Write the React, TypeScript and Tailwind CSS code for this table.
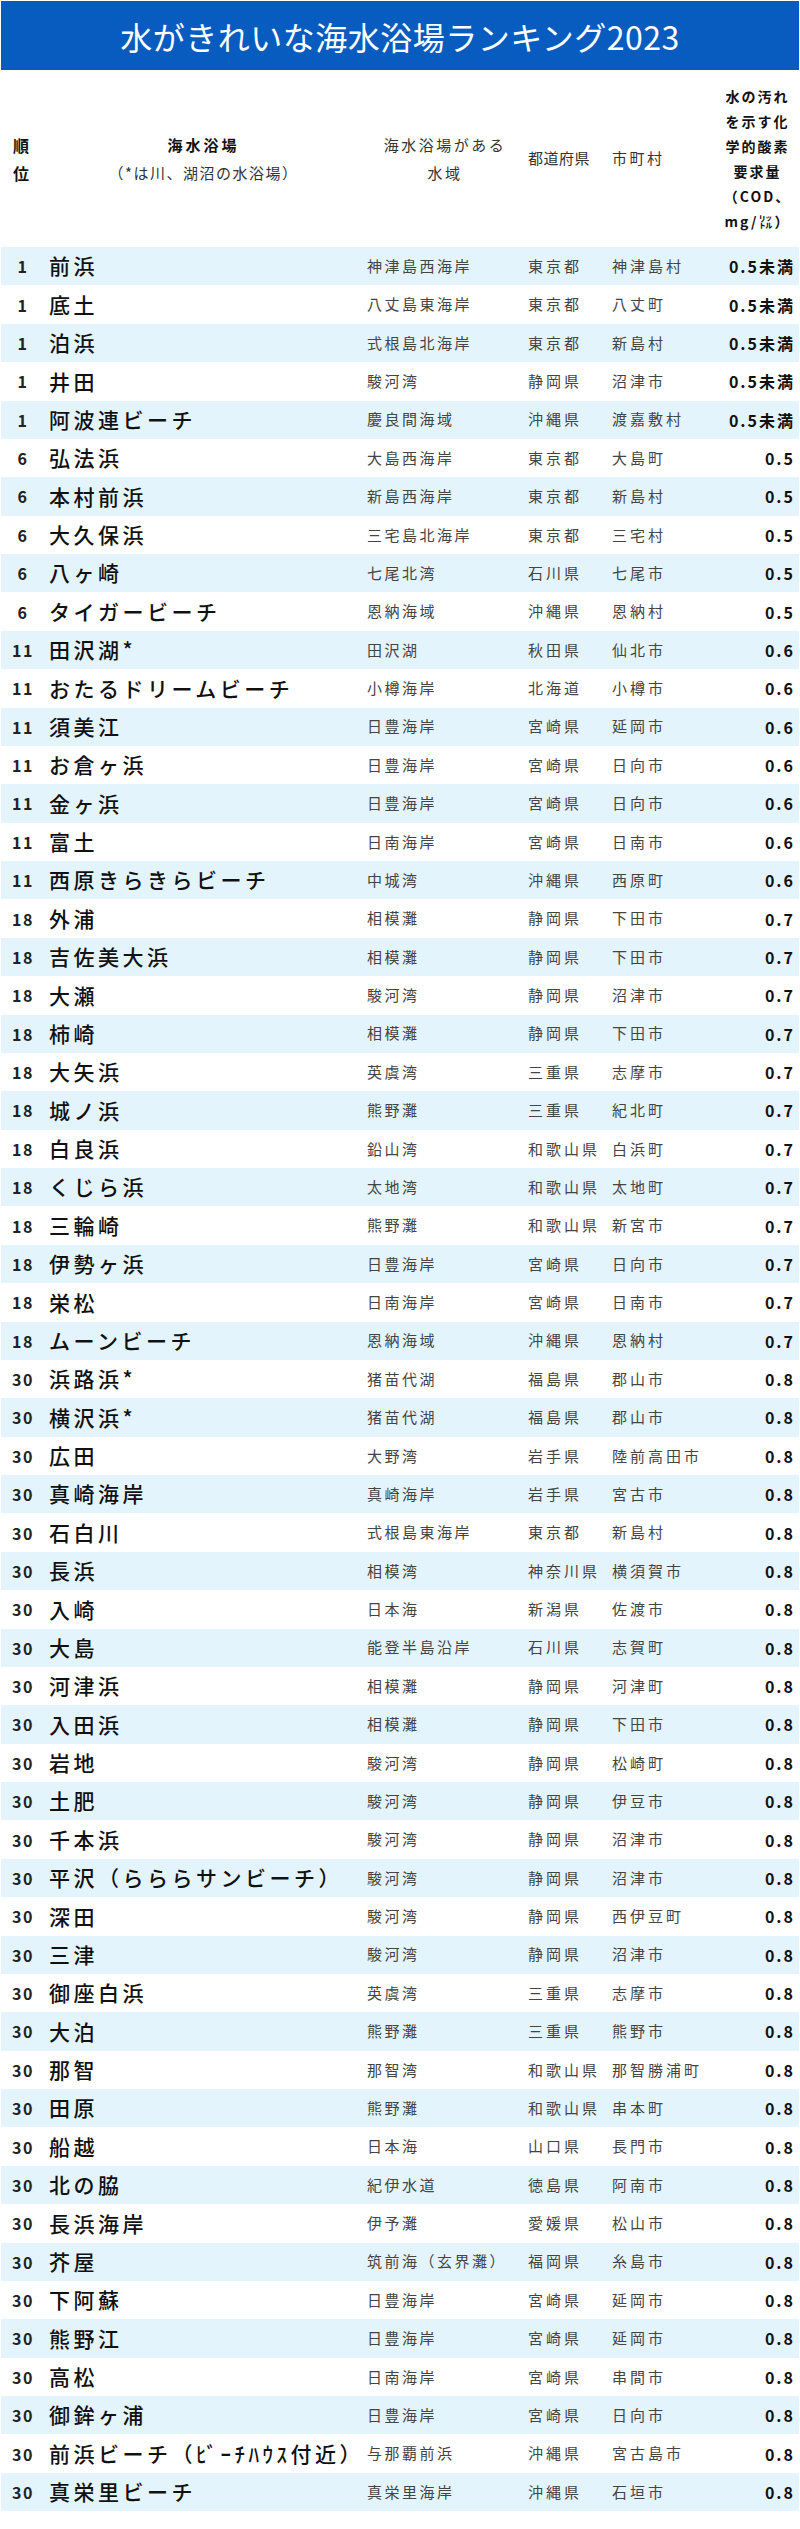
import React from "react";

type Row = [string, string, string, string, string, string];

const rows: Row[] = [
  ["1", "前浜", "神津島西海岸", "東京都", "神津島村", "0.5未満"],
  ["1", "底土", "八丈島東海岸", "東京都", "八丈町", "0.5未満"],
  ["1", "泊浜", "式根島北海岸", "東京都", "新島村", "0.5未満"],
  ["1", "井田", "駿河湾", "静岡県", "沼津市", "0.5未満"],
  ["1", "阿波連ビーチ", "慶良間海域", "沖縄県", "渡嘉敷村", "0.5未満"],
  ["6", "弘法浜", "大島西海岸", "東京都", "大島町", "0.5"],
  ["6", "本村前浜", "新島西海岸", "東京都", "新島村", "0.5"],
  ["6", "大久保浜", "三宅島北海岸", "東京都", "三宅村", "0.5"],
  ["6", "八ヶ崎", "七尾北湾", "石川県", "七尾市", "0.5"],
  ["6", "タイガービーチ", "恩納海域", "沖縄県", "恩納村", "0.5"],
  ["11", "田沢湖*", "田沢湖", "秋田県", "仙北市", "0.6"],
  ["11", "おたるドリームビーチ", "小樽海岸", "北海道", "小樽市", "0.6"],
  ["11", "須美江", "日豊海岸", "宮崎県", "延岡市", "0.6"],
  ["11", "お倉ヶ浜", "日豊海岸", "宮崎県", "日向市", "0.6"],
  ["11", "金ヶ浜", "日豊海岸", "宮崎県", "日向市", "0.6"],
  ["11", "富土", "日南海岸", "宮崎県", "日南市", "0.6"],
  ["11", "西原きらきらビーチ", "中城湾", "沖縄県", "西原町", "0.6"],
  ["18", "外浦", "相模灘", "静岡県", "下田市", "0.7"],
  ["18", "吉佐美大浜", "相模灘", "静岡県", "下田市", "0.7"],
  ["18", "大瀬", "駿河湾", "静岡県", "沼津市", "0.7"],
  ["18", "柿崎", "相模灘", "静岡県", "下田市", "0.7"],
  ["18", "大矢浜", "英虞湾", "三重県", "志摩市", "0.7"],
  ["18", "城ノ浜", "熊野灘", "三重県", "紀北町", "0.7"],
  ["18", "白良浜", "鉛山湾", "和歌山県", "白浜町", "0.7"],
  ["18", "くじら浜", "太地湾", "和歌山県", "太地町", "0.7"],
  ["18", "三輪崎", "熊野灘", "和歌山県", "新宮市", "0.7"],
  ["18", "伊勢ヶ浜", "日豊海岸", "宮崎県", "日向市", "0.7"],
  ["18", "栄松", "日南海岸", "宮崎県", "日南市", "0.7"],
  ["18", "ムーンビーチ", "恩納海域", "沖縄県", "恩納村", "0.7"],
  ["30", "浜路浜*", "猪苗代湖", "福島県", "郡山市", "0.8"],
  ["30", "横沢浜*", "猪苗代湖", "福島県", "郡山市", "0.8"],
  ["30", "広田", "大野湾", "岩手県", "陸前高田市", "0.8"],
  ["30", "真崎海岸", "真崎海岸", "岩手県", "宮古市", "0.8"],
  ["30", "石白川", "式根島東海岸", "東京都", "新島村", "0.8"],
  ["30", "長浜", "相模湾", "神奈川県", "横須賀市", "0.8"],
  ["30", "入崎", "日本海", "新潟県", "佐渡市", "0.8"],
  ["30", "大島", "能登半島沿岸", "石川県", "志賀町", "0.8"],
  ["30", "河津浜", "相模灘", "静岡県", "河津町", "0.8"],
  ["30", "入田浜", "相模灘", "静岡県", "下田市", "0.8"],
  ["30", "岩地", "駿河湾", "静岡県", "松崎町", "0.8"],
  ["30", "土肥", "駿河湾", "静岡県", "伊豆市", "0.8"],
  ["30", "千本浜", "駿河湾", "静岡県", "沼津市", "0.8"],
  ["30", "平沢（らららサンビーチ）", "駿河湾", "静岡県", "沼津市", "0.8"],
  ["30", "深田", "駿河湾", "静岡県", "西伊豆町", "0.8"],
  ["30", "三津", "駿河湾", "静岡県", "沼津市", "0.8"],
  ["30", "御座白浜", "英虞湾", "三重県", "志摩市", "0.8"],
  ["30", "大泊", "熊野灘", "三重県", "熊野市", "0.8"],
  ["30", "那智", "那智湾", "和歌山県", "那智勝浦町", "0.8"],
  ["30", "田原", "熊野灘", "和歌山県", "串本町", "0.8"],
  ["30", "船越", "日本海", "山口県", "長門市", "0.8"],
  ["30", "北の脇", "紀伊水道", "徳島県", "阿南市", "0.8"],
  ["30", "長浜海岸", "伊予灘", "愛媛県", "松山市", "0.8"],
  ["30", "芥屋", "筑前海（玄界灘）", "福岡県", "糸島市", "0.8"],
  ["30", "下阿蘇", "日豊海岸", "宮崎県", "延岡市", "0.8"],
  ["30", "熊野江", "日豊海岸", "宮崎県", "延岡市", "0.8"],
  ["30", "高松", "日南海岸", "宮崎県", "串間市", "0.8"],
  ["30", "御鉾ヶ浦", "日豊海岸", "宮崎県", "日向市", "0.8"],
  ["30", "前浜ビーチ（ﾋﾞｰﾁﾊｳｽ付近）", "与那覇前浜", "沖縄県", "宮古島市", "0.8"],
  ["30", "真栄里ビーチ", "真栄里海岸", "沖縄県", "石垣市", "0.8"],
];

const grid = "grid grid-cols-[43px_323px_161px_84px_108px_1fr]";

export default function App() {
  return (
    <div className="w-[800px] bg-white px-[1px] pt-[1px] font-['Noto_Sans_CJK_JP','Noto_Sans',sans-serif]">
      <div className="flex h-[69px] items-center justify-center bg-[#095cbf] text-[32px] tracking-[0.5px] text-white">
        水がきれいな海水浴場ランキング2023
      </div>

      <div className={`${grid} h-[177px] items-center`}>
        <div className="pl-[12px] text-[16px] font-bold leading-[28px] text-[#111]">
          <div>順</div>
          <div>位</div>
        </div>
        <div className="pr-[4px] text-center leading-[28px]">
          <div className="text-[15px] font-bold tracking-[3px] text-[#111]">海水浴場</div>
          <div className="text-[15px] tracking-[1.5px] text-[#333]">（*は川、湖沼の水浴場）</div>
        </div>
        <div className="pr-[5px] text-center text-[15px] leading-[28px] tracking-[2.5px] text-[#333]">
          <div>海水浴場がある</div>
          <div>水域</div>
        </div>
        <div className="text-[15px] tracking-[0.5px] text-[#333]">都道府県</div>
        <div className="text-[15px] tracking-[2.5px] text-[#333]">市町村</div>
        <div className="pr-[4px] text-center text-[14px] font-bold leading-[25px] tracking-[2px] text-[#111]">
          <div>水の汚れ</div>
          <div>を示す化</div>
          <div>学的酸素</div>
          <div>要求量</div>
          <div>（COD、</div>
          <div>mg/㍑）</div>
        </div>
      </div>

      <div>
        {rows.map((r, i) => (
          <div
            key={i}
            className={`${grid} h-[38.39px] items-center ${i % 2 === 0 ? "bg-[#e3f4fc]" : "bg-white"}`}
          >
            <div className="pl-[1px] text-center text-[16px] font-bold tracking-[1.5px] text-[#222]">{r[0]}</div>
            <div className="whitespace-nowrap pl-[5px] text-[21px] font-medium tracking-[3.5px] text-[#111]">{r[1]}</div>
            <div className="whitespace-nowrap text-[15px] tracking-[2.5px] text-[#444]">{r[2]}</div>
            <div className="whitespace-nowrap text-[15px] tracking-[3px] text-[#444]">{r[3]}</div>
            <div className="whitespace-nowrap text-[15px] tracking-[3px] text-[#444]">{r[4]}</div>
            <div className="whitespace-nowrap pr-[4px] text-right text-[16px] font-bold tracking-[2px] text-[#111]">{r[5]}</div>
          </div>
        ))}
      </div>
    </div>
  );
}
